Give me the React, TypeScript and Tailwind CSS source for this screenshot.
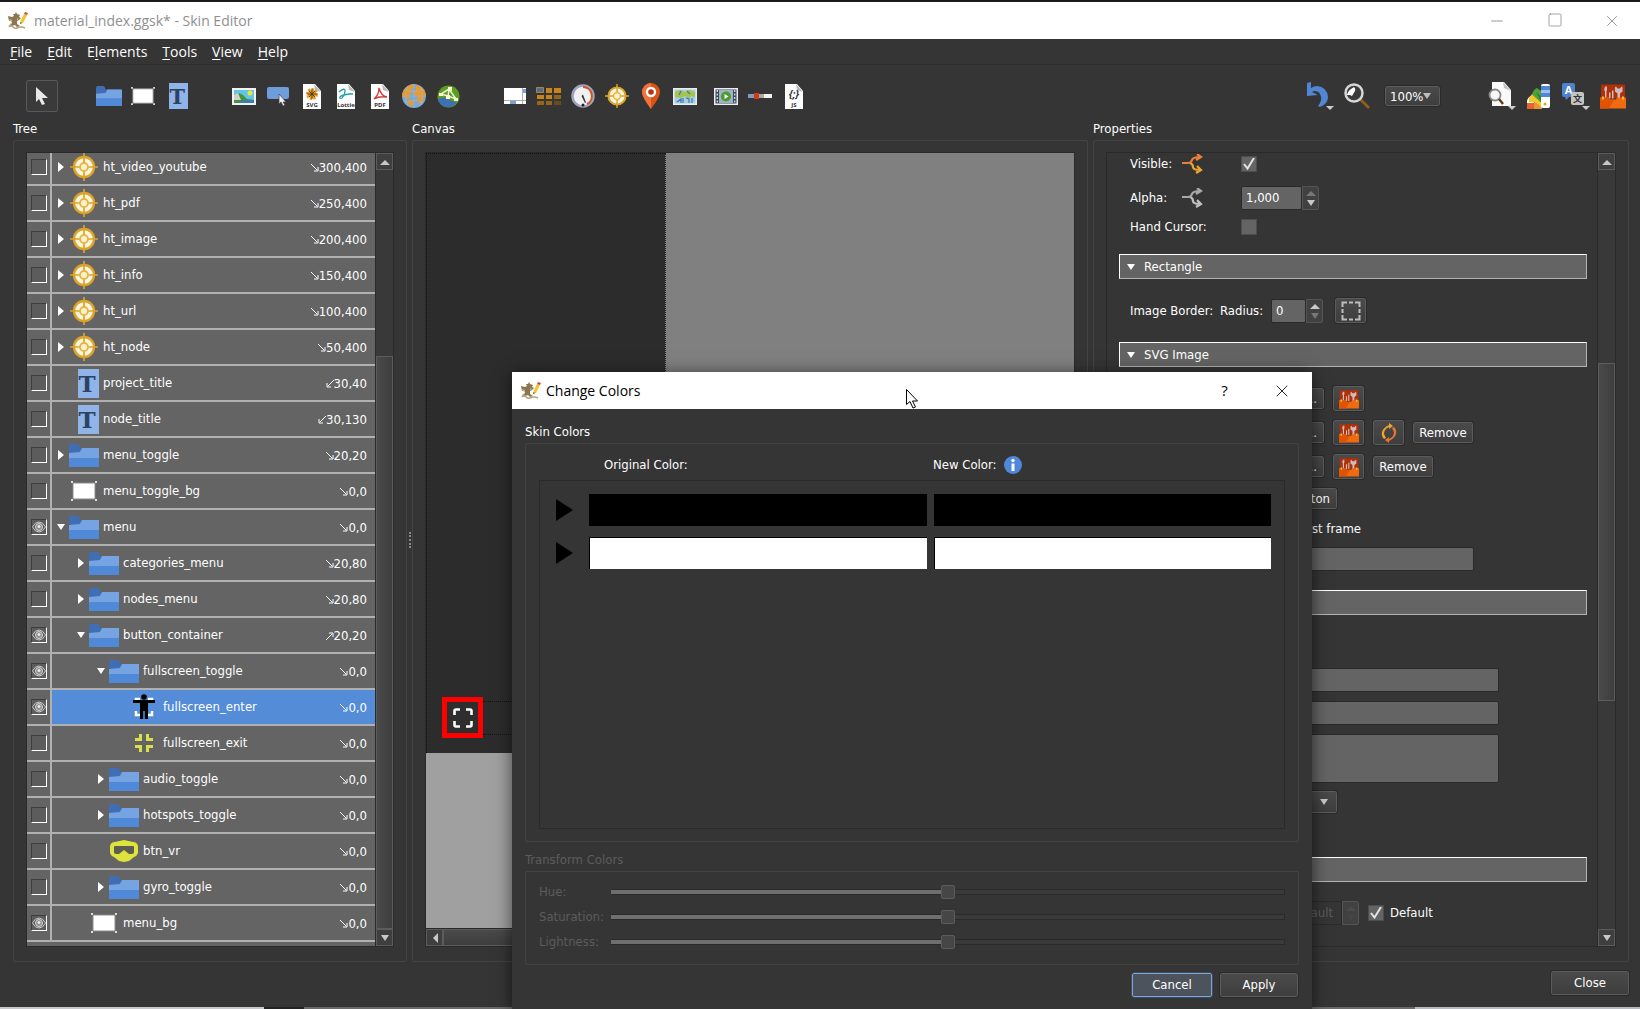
import React from "react";
import classNames from "clsx";
import { Minus, Square, X } from "lucide-react";

const treeItems = [
  { id: 1, label: "ht_video_youtube", icon: "target", level: 0, arrow: "right", pos: "300,400", anchor: "se" },
  { id: 2, label: "ht_pdf", icon: "target", level: 0, arrow: "right", pos: "250,400", anchor: "se" },
  { id: 3, label: "ht_image", icon: "target", level: 0, arrow: "right", pos: "200,400", anchor: "se" },
  { id: 4, label: "ht_info", icon: "target", level: 0, arrow: "right", pos: "150,400", anchor: "se" },
  { id: 5, label: "ht_url", icon: "target", level: 0, arrow: "right", pos: "100,400", anchor: "se" },
  { id: 6, label: "ht_node", icon: "target", level: 0, arrow: "right", pos: "50,400", anchor: "se" },
  { id: 7, label: "project_title", icon: "text", level: 0, pos: "30,40", anchor: "sw" },
  { id: 8, label: "node_title", icon: "text", level: 0, pos: "30,130", anchor: "sw" },
  { id: 9, label: "menu_toggle", icon: "folder", level: 0, arrow: "right", pos: "20,20", anchor: "se" },
  { id: 10, label: "menu_toggle_bg", icon: "rect", level: 0, pos: "0,0", anchor: "se" },
  { id: 11, label: "menu", icon: "folder", level: 0, arrow: "down", pos: "0,0", anchor: "se", visible: true },
  { id: 12, label: "categories_menu", icon: "folder", level: 1, arrow: "right", pos: "20,80", anchor: "se" },
  { id: 13, label: "nodes_menu", icon: "folder", level: 1, arrow: "right", pos: "20,80", anchor: "se" },
  { id: 14, label: "button_container", icon: "folder", level: 1, arrow: "down", pos: "20,20", anchor: "ne", visible: true },
  { id: 15, label: "fullscreen_toggle", icon: "folder", level: 2, arrow: "down", pos: "0,0", anchor: "se", visible: true },
  { id: 16, label: "fullscreen_enter", icon: "enter", level: 3, pos: "0,0", anchor: "se", visible: true },
  { id: 17, label: "fullscreen_exit", icon: "exit", level: 3, pos: "0,0", anchor: "se" },
  { id: 18, label: "audio_toggle", icon: "folder", level: 2, arrow: "right", pos: "0,0", anchor: "se" },
  { id: 19, label: "hotspots_toggle", icon: "folder", level: 2, arrow: "right", pos: "0,0", anchor: "se" },
  { id: 20, label: "btn_vr", icon: "vr", level: 2, pos: "0,0", anchor: "se" },
  { id: 21, label: "gyro_toggle", icon: "folder", level: 2, arrow: "right", pos: "0,0", anchor: "se" },
  { id: 22, label: "menu_bg", icon: "rect", level: 1, pos: "0,0", anchor: "se", visible: true },
];

const menus = [
  { before: "", key: "F", after: "ile" },
  { before: "", key: "E", after: "dit" },
  { before: "E", key: "l", after: "ements" },
  { before: "", key: "T", after: "ools" },
  { before: "", key: "V", after: "iew" },
  { before: "", key: "H", after: "elp" },
];

const indents = ["pl-0", "pl-5", "pl-10", "pl-[60px]"];

const buttonClasses =
  "flex items-center rounded-[2px] border border-[#5c5c5c] bg-linear-to-b from-[#4a4a4a] to-[#3e3e3e] outline outline-[#2a2a2a] text-white";
const fieldClasses = "bg-[#646464] border border-[#2a2a2a] rounded-[2px] text-white px-1 outline-none";

/* ---------- icons ---------- */

const AppIcon = () => (
  <svg width="20" height="18" viewBox="0 0 20 18" className="shrink-0">
    <path d="M0 4l4 1 2-1-1-2 2 0 1-2 1 2 3 1-1 2 2 1-2 2-2 1v3l3 2-3 1-2-2-3 1-2-1 2-2-1-3-2 1z" fill="#8a7650" />
    <path d="M1 7l3 1-1 2zM9 6l2 1-2 1z" fill="#c9bb98" />
    <path d="M1 15q2-2 4 0t4 1 4-1 4 1M3 12l-2 3" fill="none" stroke="#b5a47c" strokeWidth="1.500" />
    <path d="M12 12l1-4 3-6 3 1-4 8z" fill="#f7c326" />
    <path d="M16 2l1-2 3 1-1 2z" fill="#c8503a" />
    <path d="M12 12l.5-2 1.500 1z" fill="#555" />
  </svg>
);

const Target = ({ size = 24 }) => (
  <svg width={size} height={size} viewBox="0 0 28 28">
    <circle cx="14" cy="14" r="10" fill="#fdf6df" stroke="#dda32a" strokeWidth="2.400" />
    <path d="M14 0v28M0 14h28" stroke="#dda32a" strokeWidth="1.700" />
    <circle cx="14" cy="14" r="4" fill="#fdf1cc" stroke="#e6b548" strokeWidth="1.800" />
  </svg>
);

const Folder = ({ width = 26, height = 20 }) => (
  <svg width={width} height={height} viewBox="0 0 30 23" preserveAspectRatio="none">
    <path d="M0 2q0-2 2-2h6q2 0 2.500 2l.5 2h17v6H0z" fill="#3f6eb5" />
    <path d="M0 9l11-1 2-4h17v18H0z" fill="#76a4e2" />
    <path d="M0 14h30v9H0z" fill="#5089d8" />
  </svg>
);

const RectIcon = ({ width = 24, height = 18 }) => (
  <svg width={width} height={height} viewBox="0 0 26 20" preserveAspectRatio="none">
    <path d="M2 2h22v16H2z" fill="#fff" stroke="#8b8b8b" />
    <path d="M0 0h2v2H0zM24 0h2v2h-2zM0 18h2v2H0zM24 18h2v2h-2z" fill="#ddd" />
  </svg>
);

const TextIcon = ({ width = 19, height = 26 }) => (
  <svg width={width} height={height} viewBox="0 0 21 29" preserveAspectRatio="none">
    <rect width="21" height="29" fill="#90b4e8" />
    <text x="9" y="23" textAnchor="middle" fontFamily="DejaVu Serif" fontWeight="bold" fontSize="23" fill="#2c4263">T</text>
  </svg>
);

const EnterIcon = () => (
  <svg width="24" height="26" viewBox="0 0 24 26">
    <path d="M4 9V5h4M16 5h4v4M4 17v4h4M16 21h4v-4" fill="none" stroke="#fff" strokeWidth="2.500" />
    <circle cx="12" cy="3" r="2.800" fill="#000" />
    <path d="M1 6h22v3h-7v16h-3.200v-8h-1.600v8H8V9H1z" fill="#000" />
  </svg>
);

const ExitIcon = () => (
  <svg width="18" height="18" viewBox="0 0 18 18">
    <path d="M0 5.500h5.500V0M12.500 0v5.500H18M0 12.500h5.500V18M12.500 18v-5.500H18" fill="none" stroke="#dbe04a" strokeWidth="3" />
  </svg>
);

const VrIcon = () => (
  <svg width="28" height="22" viewBox="0 0 28 22">
    <path d="M5 2L14 0l9 2q4 0 5 4v7q-1 3-4 4l-5 4-5 1-5-1-5-4q-3-1-4-4V6q1-4 5-4z" fill="#dde23c" />
    <path d="M5 6h18q1 0 1 1v5q0 2-2 2h-3l-5-4-5 4H6q-2 0-2-2V7q0-1 1-1z" fill="#5c5c50" />
  </svg>
);

const PictureIcon = () => (
  <svg width="24" height="17" viewBox="0 0 24 17">
    <rect width="24" height="17" fill="#f2f2f2" />
    <rect x="2" y="2" width="20" height="13" fill="#62c4e6" />
    <circle cx="18" cy="5" r="2.500" fill="#f6e32e" />
    <path d="M2 12l5-7 4 2 4 4 7 1v3H2z" fill="#49923a" />
    <path d="M2 7l4-2 3 7H2z" fill="#cfd3cc" />
    <path d="M8 13q7-2 14-1v3H6z" fill="#3b80b3" />
  </svg>
);

const ButtonIcon = () => (
  <svg width="22" height="20" viewBox="0 0 22 20">
    <rect y="1" width="22" height="12" rx="2" fill="#6e9cdc" />
    <path d="M12 8v10l2-2 2 4 2-1-2-3h3z" fill="#eee" stroke="#444" strokeWidth=".7" />
  </svg>
);

const DocIcon = ({ caption, children }) => (
  <svg width="20" height="25" viewBox="0 0 20 25">
    <path d="M1 0h12l6 7v18H1z" fill="#fdfdfd" />
    <path d="M12 0l7 8-6-2z" fill="#b9b9b9" />
    {children}
    <text x="10" y="23" textAnchor="middle" fontFamily="Noto Sans" fontWeight="bold" fontSize="6" fill="#333">{caption}</text>
  </svg>
);

const EarthIcon = () => (
  <svg width="24" height="24" viewBox="0 0 24 24">
    <circle cx="12" cy="12" r="12" fill="#7aa9d6" />
    <path d="M2 6q4-5 9-6l1 3-3 2 1 3-3 3 1 3-3 1-3-2-2-1Q0 9 2 6zM14 1q5 1 8 5l2 5-2 1-1 5-4 3-2-5 1-3-4-1-1-3 3-2zM7 15l5 2-1 4-2 2-3-4z" fill="#ea9a2c" />
    <path d="M12 0v24M0 12h24M3 5q9 5 18 0M3 19q9-5 18 0M6 2q-5 10 0 20M18 2q5 10 0 20" fill="none" stroke="#a3b9c8" strokeWidth=".6" />
  </svg>
);

const RouteIcon = () => (
  <svg width="23" height="23" viewBox="0 0 23 23">
    <circle cx="11.500" cy="11.500" r="11" fill="#5a9e24" />
    <path d="M1 14q5-3 10 0t9 3q-3 5-9 5Q3 22 1 14z" fill="#3f6fb4" />
    <path d="M4 9l8-5 7 10-8-3zM12 4l-1 8" fill="none" stroke="#f2f4d4" strokeWidth="1.500" />
    <path d="M2 8h4v3H2zM11 2h4v4h-4zM17 13h4v3h-4zM9 10h4v4H9z" fill="#fdfbc9" />
  </svg>
);

const WindowIcon = () => (
  <svg width="22" height="16" viewBox="0 0 22 16">
    <rect width="22" height="16" fill="#fff" />
    <path d="M0 12.500h22M18.500 0v16" stroke="#999" strokeWidth=".8" />
    <path d="M19 1h3v4h-3zM6 13h6v3H6z" fill="#7ba1d8" />
  </svg>
);

const GridIcon = () => (
  <svg width="26" height="19" viewBox="0 0 26 19">
    <path d="M10 1h6v5h-6zM18 1h7v5h-7zM1 8h7v4H1zM10 8h6v4h-6z" fill="#c98418" />
    <path d="M18 8h7v4h-7zM1 14h7v4H1zM10 14h6v4h-6z" fill="#93651d" />
    <path d="M18 14h7v4h-7z" fill="#664b22" />
    <path d="M.5.500h7v5h-7z" fill="#4b7192" stroke="#a8843f" />
  </svg>
);

const GaugeIcon = () => (
  <svg width="24" height="24" viewBox="0 0 24 24">
    <circle cx="12" cy="12" r="10.500" fill="#f1f1f1" stroke="#9ea4bf" strokeWidth="2.500" />
    <path d="M12 3a9 9 0 0 1 4 17" fill="none" stroke="#d4521c" strokeWidth="2" />
    <path d="M10.500 12l1.500-1.500 3 8-1 .5z" fill="#333" />
    <circle cx="12" cy="21" r="1.500" fill="#222" />
  </svg>
);

const PinIcon = () => (
  <svg width="18" height="26" viewBox="0 0 18 26">
    <path d="M9 0a9 9 0 0 1 9 9q0 5-9 17Q0 14 0 9a9 9 0 0 1 9-9z" fill="#dc5214" />
    <path d="M9 0v26Q0 14 0 9a9 9 0 0 1 9-9z" fill="#f2713c" />
    <circle cx="9" cy="9" r="4" fill="#b5330d" stroke="#fff" strokeWidth="2.400" />
  </svg>
);

const MapIcon = () => (
  <svg width="24" height="17" viewBox="0 0 24 17">
    <rect width="24" height="17" fill="#e9eef0" />
    <rect x="1.500" y="1.500" width="21" height="14" fill="#a9cbe4" />
    <path d="M2 4l5-2 5 2 4-2 6 2v5l-4-1-2 3-4-3-5 2-5-1z" fill="#a4c44c" />
    <path d="M4 14l4-3v4M10 10v5M13 10l3 1v4M19 10v5M8 3L6 7M14 3l3 3" fill="none" stroke="#3d7bab" strokeWidth="1.200" />
  </svg>
);

const VideoIcon = () => (
  <svg width="24" height="17" viewBox="0 0 24 17">
    <rect width="24" height="17" fill="#eee" />
    <rect x="1.500" y="1.500" width="21" height="14" fill="#3c4557" />
    <rect x="5" y="2" width="14" height="13" fill="#9fb2c6" />
    <path d="M3.300 2v13M20.700 2v13" stroke="#c9d2e4" strokeWidth="1.500" strokeDasharray="2 1.500" />
    <circle cx="12" cy="8.500" r="5" fill="#4b9d2b" />
    <path d="M10.500 6l4 2.500-4 2.500z" fill="#fff" />
  </svg>
);

const SliderIcon = () => (
  <svg width="24" height="6" viewBox="0 0 24 6">
    <rect y="1" width="24" height="4" fill="#f4f4f4" />
    <path d="M0 1h7v4H0z" fill="#7d9ccc" />
    <path d="M11 1h5v4h-5z" fill="#aaa" />
    <rect x="6" width="5" height="6" fill="#dc3912" />
  </svg>
);

const UndoIcon = () => (
  <svg width="28" height="28" viewBox="0 0 28 28">
    <path d="M1 1l4-1v6q3-2 6-2 10 1 11 11 0 7-8 10l-2-1q4-5 3-9-1-6-6-6-2 0-3 1l6 3-11 1z" fill="#5086d4" />
    <path d="M20 24h8l-4 4z" fill="#ccc" />
  </svg>
);

const ZoomIcon = () => (
  <svg width="26" height="26" viewBox="0 0 26 26">
    <path d="M15 17l2-2 9 9-2 2z" fill="#8c5e1d" />
    <circle cx="10" cy="10" r="8.500" fill="#3a3a3a" stroke="#d6d6d6" strokeWidth="2.500" />
    <path d="M3 12q1-5 7-8 2 2 1 4l-3 5-2-1z" fill="#fff" />
  </svg>
);

const DocSearchIcon = () => (
  <svg width="28" height="28" viewBox="0 0 28 28">
    <path d="M4 0h12l7 8v16H4z" fill="#fafafa" />
    <path d="M15 0l8 9-7-3z" fill="#c2c2c2" />
    <circle cx="7" cy="13" r="5.500" fill="#f7f7f7" stroke="#888" strokeWidth="1.800" />
    <path d="M11 17l4 5" stroke="#5c3a1a" strokeWidth="2.400" />
    <path d="M20 24h8l-4 4z" fill="#ccc" />
  </svg>
);

const PaletteIcon = () => (
  <svg width="24" height="25" viewBox="0 0 24 25">
    <path d="M0 17q1-4 4-5l3 3v10H0z" fill="#fff" />
    <path d="M0 19h7v6H0z" fill="#e8622a" />
    <path d="M7 19h8v6H7z" fill="#e9933c" />
    <path d="M2 14l3-4 11 10-1 4q-5-7-13-6z" fill="#f5c92d" />
    <path d="M5 10q2-5 5-6l7 5v12z" fill="#4da13a" />
    <path d="M9 8l6 5v6z" fill="#2f7f2c" />
    <rect x="14" width="9" height="24" rx="2" fill="#fff" />
    <path d="M14 2h9v4h-9zM14 9h9v4h-9z" fill="#4e87d8" />
    <path d="M14 6h9v3h-9z" fill="#9ec0ee" />
    <circle cx="18" cy="20" r="1.500" fill="#dda32a" />
  </svg>
);

const TranslateIcon = () => (
  <svg width="28" height="28" viewBox="0 0 28 28">
    <rect y="1" width="13" height="14" rx="2" fill="#4d82d0" />
    <path d="M3 14h5l-4 4z" fill="#4d82d0" />
    <text x="6.500" y="12" textAnchor="middle" fontFamily="Noto Sans" fontWeight="bold" fontSize="11" fill="#fff">A</text>
    <rect x="9" y="10" width="13" height="13" rx="2" fill="#c4c4c4" />
    <text x="15.500" y="20" textAnchor="middle" fontFamily="Noto Sans CJK SC" fontWeight="bold" fontSize="9" fill="#333">文</text>
    <path d="M20 24h8l-4 4z" fill="#ccc" />
  </svg>
);

const ToolboxIcon = ({ size = 26 }) => (
  <svg width={size} height={size} viewBox="0 0 26 25">
    <path d="M1 1h24v14H1z" fill="#b03008" />
    <path d="M5 3h2v4H6.500v8H5V7H4zM9 9h1.500v6H9zM12 7h1.500v8H12zM16 3l1.500 2H20l1.500-2 1 1v4l-2.500 2v5h-2.500v-5L15 8V4z" fill="#cdbcc0" />
    <path d="M0 14h9l1 2h6l1-2h9v11H0z" fill="#f06a10" />
    <path d="M0 14h9l1 2h4L9 25H0z" fill="#e05304" />
    <path d="M2 13h2v3H2zM22 13h2v3h-2z" fill="#f8c030" />
  </svg>
);

const BranchIcon = ({ top, bottom }) => (
  <svg width="22" height="20" viewBox="0 0 22 20">
    <path d="M8 9q3 1 3 4t7 3M15 12l4 4-5 3" fill="none" stroke={bottom} strokeWidth="2.200" />
    <path d="M0 9h6q3 0 4-3t8-3M15 0l4 3-5 3" fill="none" stroke={top} strokeWidth="2.200" />
  </svg>
);

const RefreshIcon = () => (
  <svg width="16" height="20" viewBox="0 0 16 20">
    <path d="M8 0l4 3-4 3v-2Q3 6 3 11l2 4-2 1Q0 13 1 9t7-7z" fill="#f0a52c" />
    <path d="M8 20l-4-3 4-3v2q5-2 5-7l-2-4 2-1q3 3 2 7t-7 7z" fill="#e5762f" />
  </svg>
);

const FullscreenIcon = () => (
  <svg width="20" height="20" viewBox="0 0 20 20">
    <path d="M1.500 7V3q0-1.500 1.500-1.500h4M13 1.500h4q1.500 0 1.500 1.500v4M1.500 13v4q0 1.500 1.500 1.500h4M13 18.500h4q1.500 0 1.500-1.500v-4" fill="none" stroke="#fff" strokeWidth="2.600" />
  </svg>
);

const EyeIcon = () => (
  <svg width="14" height="12" viewBox="0 0 14 12" className="pointer-events-none col-start-1 row-start-1">
    <path d="M.5 6Q3 1 7 1t6.500 5Q11 11 7 11T.5 6z" fill="none" stroke="#c9c9c9" />
    <circle cx="7" cy="6" r="3.500" fill="#8d8d8d" stroke="#d6d6d6" />
    <circle cx="7" cy="5.500" r="1.500" fill="#e8e8e8" />
  </svg>
);

const Triangle = ({ dir, className = "text-[#c8c8c8]" }) => (
  <svg width="10" height="10" viewBox="0 0 10 10" className={classNames("shrink-0", className)}>
    {dir === "up" && <path d="M0 8h10L5 3z" fill="currentColor" />}
    {dir === "down" && <path d="M1 2h8L5 8z" fill="currentColor" />}
    {dir === "left" && <path d="M8 0v10L3 5z" fill="currentColor" />}
    {dir === "right" && <path d="M2 0v10l6-5z" fill="currentColor" />}
  </svg>
);

const AnchorArrow = ({ anchor }) => (
  <svg width="8" height="8" viewBox="0 0 8 8" className="shrink-0">
    {anchor === "se" && <path d="M0 0l6 6M7 3v4H3" fill="none" stroke="#fff" />}
    {anchor === "sw" && <path d="M8 0L2 6M1 3v4h4" fill="none" stroke="#fff" />}
    {anchor === "ne" && <path d="M0 8l6-6M3 1h4v4" fill="none" stroke="#fff" />}
  </svg>
);

const treeIcons = {
  target: <Target size={28} />,
  text: <TextIcon width={21} height={29} />,
  folder: <Folder width={30} height={23} />,
  rect: <RectIcon width={26} height={20} />,
  enter: <EnterIcon />,
  exit: <ExitIcon />,
  vr: <VrIcon />,
};

/* ---------- shared pieces ---------- */

const Tool = ({ label, wide = false, children }) => (
  <button aria-label={label} className={classNames("flex h-8 items-center justify-center", wide ? "w-[37px]" : "w-[34px]")}>
    {children}
  </button>
);

const ScrollButton = ({ dir }) => (
  <button
    aria-label={"Scroll " + dir}
    className="flex h-[17px] w-[17px] shrink-0 items-center justify-center border border-[#5c5c5c] bg-[#3f3f3f]"
  >
    <Triangle dir={dir} />
  </button>
);

const VerticalScroll = ({ thumb }) => (
  <div className="flex w-[18px] shrink-0 flex-col border-l border-[#2a2a2a] bg-[#393939]">
    <ScrollButton dir="up" />
    <div className="flex-1">
      <div className={classNames("border border-[#5c5c5c] bg-linear-to-r from-[#4a4a4a] to-[#3e3e3e]", thumb)} />
    </div>
    <ScrollButton dir="down" />
  </div>
);

const Panel = ({ title, className, children }) => (
  <section className={classNames("flex min-w-0 flex-col", className)}>
    <h2 className="h-[22px] leading-[22px]">{title}</h2>
    <div className="flex min-h-0 flex-1 rounded-[2px] border border-[#444444] px-3 pt-[11px] pb-[14px]">{children}</div>
  </section>
);

const CheckBox = ({ id, checked = false }) => (
  <span className="grid h-4 w-4 shrink-0 place-items-center">
    <input
      id={id}
      type="checkbox"
      defaultChecked={checked}
      className="col-start-1 row-start-1 h-4 w-4 appearance-none border border-[#4d4d4d] bg-[#646464]"
    />
    {checked && (
      <svg width="12" height="12" viewBox="0 0 12 12" className="pointer-events-none col-start-1 row-start-1">
        <path d="M1 6l3.500 4.500L11 0" fill="none" stroke="#e4e4e4" strokeWidth="2" />
      </svg>
    )}
  </span>
);

const Steppers = ({ name, up = "text-[#c8c8c8]", down = "text-[#c8c8c8]" }) => (
  <span className="flex w-[17px] flex-col items-center justify-center rounded-r-[2px] border border-[#555] bg-[#414141]">
    <button aria-label={name + " up"} className="flex h-[10px] items-center">
      <Triangle dir="up" className={up} />
    </button>
    <button aria-label={name + " down"} className="flex h-[10px] items-center">
      <Triangle dir="down" className={down} />
    </button>
  </span>
);

const SectionHeader = ({ title = "", className }) => (
  <button
    aria-label={title || "Section"}
    className={classNames(
      "flex h-[25px] w-full shrink-0 items-center gap-2 border border-[#b4b4b4] border-t-white border-l-white bg-[#646464] px-[6px] text-left",
      className
    )}
  >
    <Triangle dir="down" className="text-white" />
    <span>{title}</span>
  </button>
);

const ToolboxButton = () => (
  <button aria-label="Edit action" className={classNames(buttonClasses, "h-[25px] w-[31px] justify-center")}>
    <ToolboxIcon size={20} />
  </button>
);

const DotsButton = () => <button className={classNames(buttonClasses, "h-[21px] w-[30px] justify-end pr-[6px]")}>...</button>;

/* ---------- main parts ---------- */

const Toolbar = () => (
  <div className="flex h-[54px] shrink-0 items-end justify-between border-t border-[#2e2e2e] pr-[9px] pb-[6px] pl-[26px]">
    <div className="flex items-center">
      <button aria-label="Select" className="mr-[34px] flex h-8 w-8 items-center justify-center rounded-[2px] border border-[#585858] bg-[#3a3a3a]">
        <svg width="14" height="18" viewBox="0 0 14 18">
          <path d="M1 0v15l3-3 3 6 3-1-3-6h6z" fill="#e8e8e8" />
        </svg>
      </button>
      <Tool label="Container"><Folder /></Tool>
      <Tool label="Rectangle"><RectIcon /></Tool>
      <Tool label="Text" wide><TextIcon /></Tool>
      <div className="ml-[30px] flex">
        <Tool label="Image"><PictureIcon /></Tool>
        <Tool label="Button"><ButtonIcon /></Tool>
        <Tool label="SVG">
          <DocIcon caption="SVG">
            <circle cx="10" cy="10" r="4" fill="#e69a22" stroke="#e69a22" strokeWidth="4" strokeDasharray="2 1" />
            <path d="M10 5v10M5 10h10M7 7l6 6M13 7l-6 6" stroke="#3d2f14" strokeWidth=".8" />
          </DocIcon>
        </Tool>
        <Tool label="Lottie">
          <DocIcon caption="Lottie">
            <path d="M3 8q6-5 6-1t-3 7q-3 1-2-1t10-3h3" fill="none" stroke="#21a0a8" strokeWidth="1.300" />
          </DocIcon>
        </Tool>
        <Tool label="PDF">
          <DocIcon caption="PDF">
            <path d="M4 15q5-4 5-11 2 8 8 9-8-1-13 2" fill="none" stroke="#cf3a34" strokeWidth="1.300" />
          </DocIcon>
        </Tool>
        <Tool label="Web"><EarthIcon /></Tool>
        <Tool label="Node map"><RouteIcon /></Tool>
      </div>
      <div className="ml-[33px] flex">
        <Tool label="Scroll area"><WindowIcon /></Tool>
        <Tool label="Cloner"><GridIcon /></Tool>
        <Tool label="Timer"><GaugeIcon /></Tool>
        <Tool label="Hotspot"><Target /></Tool>
        <Tool label="Marker"><PinIcon /></Tool>
        <Tool label="Map"><MapIcon /></Tool>
      </div>
      <div className="ml-[7px] flex">
        <Tool label="Video"><VideoIcon /></Tool>
        <Tool label="Seekbar"><SliderIcon /></Tool>
        <Tool label="Code">
          <DocIcon caption="JS">
            <text x="10" y="14" textAnchor="middle" fontFamily="Noto Sans" fontWeight="bold" fontStyle="italic" fontSize="10" fill="#333">{"{;}"}</text>
          </DocIcon>
        </Tool>
      </div>
    </div>
    <div className="flex items-center">
      <Tool label="Undo" wide><UndoIcon /></Tool>
      <Tool label="Zoom" wide><ZoomIcon /></Tool>
      <span className="mr-[43px] ml-[10px] grid items-center">
        <select aria-label="Zoom level" className={classNames(buttonClasses, "col-start-1 row-start-1 h-5 w-[55px] appearance-none pl-1")}>
          <option>100%</option>
        </select>
        <Triangle dir="down" className="pointer-events-none col-start-1 row-start-1 mr-2 justify-self-end text-[#bdbdbd]" />
      </span>
      <Tool label="Preview" wide><DocSearchIcon /></Tool>
      <Tool label="Change colors" wide><PaletteIcon /></Tool>
      <Tool label="Language" wide><TranslateIcon /></Tool>
      <Tool label="Toolbox" wide><ToolboxIcon /></Tool>
    </div>
  </div>
);

const TreeRow = ({ item }) => {
  const selectedId = 16;

  return (
    <li className="flex h-9 shrink-0 border-b-2 border-[#b0b0b0]">
      <span className="flex w-[25px] shrink-0 items-center border-r-2 border-[#b0b0b0] pl-1">
        <span className="grid h-4 w-4 place-items-center">
          <input
            type="checkbox"
            aria-label={"Show " + item.label}
            defaultChecked={item.visible}
            className="col-start-1 row-start-1 h-4 w-4 appearance-none border border-t-[#3e3e3e] border-r-white border-b-white border-l-[#3e3e3e] bg-[#5c5c5c]"
          />
          {item.visible && <EyeIcon />}
        </span>
      </span>
      <div
        className={classNames("flex min-w-0 flex-1 items-center pr-2", {
          ["bg-[#548cd8]"]: item.id === selectedId,
        })}
      >
        <span className={classNames("flex items-center", indents[item.level])}>
          <span className="flex w-[17px] justify-center pl-px">
            {item.arrow && <Triangle dir={item.arrow} className="text-white" />}
          </span>
          <span className={classNames("flex w-[30px] items-center", item.icon === "text" ? "justify-end" : "justify-center")}>
            {treeIcons[item.icon]}
          </span>
          <span className="pl-1">{item.label}</span>
        </span>
        <span className="ml-auto flex items-center pt-[2px]">
          <AnchorArrow anchor={item.anchor} />
          {item.pos}
        </span>
      </div>
    </li>
  );
};

const Tree = () => (
  <Panel title="Tree" className="w-[394px]">
    <div className="flex min-w-0 flex-1 border border-[#2a2a2a]">
      <div className="min-w-0 flex-1 overflow-hidden bg-[#646464]">
        <ul className="-mt-[3px] flex flex-col">
          {treeItems.map((item) => (
            <TreeRow item={item} key={item.id} />
          ))}
        </ul>
      </div>
      <VerticalScroll thumb="mt-[186px] h-[573px]" />
    </div>
  </Panel>
);

const Canvas = () => (
  <Panel title="Canvas" className="flex-1">
    <div className="flex min-w-0 flex-1 flex-col border border-[#2a2a2a]">
      <div className="relative flex min-h-0 flex-1 flex-col">
        <div className="flex h-[600px]">
          <div className="w-[239px] border-t border-l border-dotted border-[#111] bg-[#2c2c2c]" />
          <div className="flex-1 border-l border-dotted border-[#222] bg-[#808080]" />
        </div>
        <div className="flex-1 bg-[#a0a0a0]" />
        {/* selected element on the stage */}
        <div className="absolute top-[548px] left-[57px] h-[34px] w-[180px] border-y border-dotted border-[#111]" />
        <div className="absolute top-[544px] left-4 flex h-[41px] w-[41px] items-center justify-center border-5 border-[#ff0000] bg-[#2e2e2e]">
          <FullscreenIcon />
        </div>
      </div>
      <div className="flex h-[18px] border-t border-[#2a2a2a] bg-[#393939]">
        <ScrollButton dir="left" />
        <div className="w-[400px] border border-[#5c5c5c] bg-linear-to-b from-[#4a4a4a] to-[#3e3e3e]" />
      </div>
    </div>
  </Panel>
);

const Properties = () => (
  <Panel title="Properties" className="w-[536px]">
    <div className="flex min-w-0 flex-1 border border-[#2a2a2a]">
      <div className="flex min-w-0 flex-1 flex-col overflow-hidden pt-px pr-[10px] pl-3">
        <div className="flex h-5 shrink-0 items-center pl-[11px]">
          <label htmlFor="visible" className="w-[52px]">Visible:</label>
          <span className="w-[59px]"><BranchIcon top="#e8823a" bottom="#eda630" /></span>
          <CheckBox id="visible" checked />
        </div>
        <div className="mt-3 flex h-6 shrink-0 items-center pl-[11px]">
          <label htmlFor="alpha" className="w-[52px]">Alpha:</label>
          <span className="w-[59px]"><BranchIcon top="#a9a9a9" bottom="#c2c2c2" /></span>
          <span className="flex h-6">
            <input id="alpha" defaultValue="1,000" className={classNames(fieldClasses, "w-[61px]")} />
            <Steppers name="Alpha" up="text-[#777]" />
          </span>
        </div>
        <div className="mt-[7px] flex h-5 shrink-0 items-center pl-[11px]">
          <label htmlFor="hand" className="w-[111px]">Hand Cursor:</label>
          <CheckBox id="hand" />
        </div>

        <SectionHeader title="Rectangle" className="mt-[17px]" />
        <div className="mt-[19px] flex h-[25px] shrink-0 items-center pl-[11px]">
          <span className="w-[90px]">Image Border:</span>
          <label htmlFor="radius" className="w-[51px]">Radius:</label>
          <span className="flex h-6">
            <input id="radius" defaultValue="0" className={classNames(fieldClasses, "w-[35px]")} />
            <Steppers name="Radius" down="text-[#777]" />
          </span>
          <button aria-label="Border" className={classNames(buttonClasses, "ml-3 h-[25px] w-[31px] justify-center")}>
            <svg width="20" height="20" viewBox="0 0 20 20">
              <path d="M1.500 6V1.500H6M8 1.500h4M14 1.500h4.500V6M18.500 8v4M18.500 14v4.500H14M12 18.500H8M6 18.500H1.500V14M1.500 12V8" fill="none" stroke="#bdbdbd" strokeWidth="2" />
            </svg>
          </button>
        </div>

        <SectionHeader title="SVG Image" className="mt-[19px]" />
        <div className="mt-[19px] flex h-[25px] shrink-0 items-center gap-[9px] pl-[175px]">
          <DotsButton />
          <ToolboxButton />
        </div>
        <div className="mt-[9px] flex h-[25px] shrink-0 items-center gap-[9px] pl-[175px]">
          <DotsButton />
          <ToolboxButton />
          <button aria-label="Swap" className={classNames(buttonClasses, "h-[25px] w-[31px] justify-center")}>
            <RefreshIcon />
          </button>
          <button className={classNames(buttonClasses, "h-[21px] w-[60px] justify-center")}>Remove</button>
        </div>
        <div className="mt-[9px] flex h-[25px] shrink-0 items-center gap-[9px] pl-[175px]">
          <DotsButton />
          <ToolboxButton />
          <button className={classNames(buttonClasses, "h-[21px] w-[60px] justify-center")}>Remove</button>
        </div>
        <div className="mt-[9px] flex h-[21px] w-[218px] shrink-0 justify-end">
          <button className={classNames(buttonClasses, "px-[6px]")}>Button</button>
        </div>
        <p className="mt-[10px] h-5 w-[242px] shrink-0 text-right leading-5">first frame</p>
        <input aria-label="Style" className={classNames(fieldClasses, "mt-2 ml-[116px] h-6 w-[239px] shrink-0")} />

        <SectionHeader className="mt-[19px]" />
        <input aria-label="Title" className={classNames(fieldClasses, "mt-[53px] ml-[116px] h-6 w-[264px] shrink-0")} />
        <input aria-label="Hint" className={classNames(fieldClasses, "mt-[9px] ml-[116px] h-6 w-[264px] shrink-0")} />
        <textarea aria-label="Description" className={classNames(fieldClasses, "mt-[9px] ml-[116px] h-[49px] w-[264px] shrink-0 resize-none")} />
        <span className="mt-2 ml-[116px] grid h-[22px] w-[102px] shrink-0 items-center">
          <select aria-label="Mode" className={classNames(buttonClasses, "col-start-1 row-start-1 h-[22px] w-full appearance-none")} />
          <Triangle dir="down" className="pointer-events-none col-start-1 row-start-1 mr-2 justify-self-end text-[#c8c8c8]" />
        </span>

        <SectionHeader className="mt-[44px]" />
        <div className="mt-[19px] flex h-6 shrink-0 items-center pl-[116px]">
          <span className="flex h-6">
            <input
              aria-label="Tab index"
              disabled
              defaultValue="Default"
              className="w-[107px] border border-[#2a2a2a] pr-2 text-right text-[#5c5c5c]"
            />
            <Steppers name="Tab index" up="text-[#4a4a4a]" down="text-[#454545]" />
          </span>
          <span className="ml-[9px] flex items-center gap-[6px]">
            <CheckBox id="default" checked />
            <label htmlFor="default">Default</label>
          </span>
        </div>
      </div>
      <VerticalScroll thumb="mt-[193px] h-[338px]" />
    </div>
  </Panel>
);

const ColorRow = ({ name, swatch }) => (
  <div className="flex h-8 items-center">
    <button aria-label={"Expand " + name} className="w-[33px]">
      <svg width="17" height="24" viewBox="0 0 17 24">
        <path d="M0 1v22l17-11z" fill="#000" />
      </svg>
    </button>
    <div className={classNames("h-8 flex-1 border-t border-l border-black", swatch)} />
    <button aria-label={"New color for " + name} className={classNames("ml-[7px] h-8 flex-1 border-t border-l border-black", swatch)} />
  </div>
);

const TransformSlider = ({ label }) => (
  <div className="flex h-[25px] items-center">
    <label htmlFor={label} className="w-[72px]">{label}:</label>
    <span className="grid flex-1 items-center">
      <span className="col-start-1 row-start-1 flex">
        <span className="h-[6px] w-1/2 border-y border-[#2a2a2a] bg-[#6f6f6f]" />
        <span className="h-[6px] w-1/2 border border-[#2a2a2a] bg-[#3a3a3a]" />
      </span>
      <input
        id={label}
        type="range"
        disabled
        className="col-start-1 row-start-1 w-full appearance-none bg-transparent [&::-webkit-slider-thumb]:h-[14px] [&::-webkit-slider-thumb]:w-[14px] [&::-webkit-slider-thumb]:appearance-none [&::-webkit-slider-thumb]:rounded-[2px] [&::-webkit-slider-thumb]:border [&::-webkit-slider-thumb]:border-[#5c5c5c] [&::-webkit-slider-thumb]:bg-[#464646]"
      />
    </span>
  </div>
);

const ChangeColorsDialog = () => (
  <div
    role="dialog"
    aria-label="Change Colors"
    className="absolute top-[372px] left-[512px] flex h-[640px] w-[800px] flex-col bg-[#353535] shadow-[0_2px_16px_rgba(0,0,0,0.6)]"
  >
    <header className="flex h-[37px] items-center bg-white pl-[9px] text-black">
      <AppIcon />
      <span className="pl-[5px] font-['Open_Sans',sans-serif] text-[14px]">Change Colors</span>
      <button aria-label="Help" className="ml-auto w-[57px] font-['Open_Sans',sans-serif] text-[15px]">?</button>
      <button aria-label="Close dialog" className="mr-[2px] flex w-[57px] justify-center">
        <X size={20} strokeWidth={1} />
      </button>
    </header>
    <div className="flex flex-col px-[13px] pt-3">
      <h2 className="h-[22px] leading-[22px]">Skin Colors</h2>
      <div className="h-[399px] rounded-[2px] border border-[#444444] px-[13px]">
        <div className="flex h-[36px] items-center pt-[6px]">
          <span className="w-[329px] pl-[65px]">Original Color:</span>
          <span className="flex items-center gap-2 pl-[65px]">
            New Color:
            <svg width="18" height="18" viewBox="0 0 18 18">
              <circle cx="9" cy="9" r="9" fill="#4f87d9" />
              <circle cx="9" cy="4.500" r="1.700" fill="#fff" />
              <path d="M7.500 7.500h3V15h-3z" fill="#fff" />
            </svg>
          </span>
        </div>
        <div className="flex h-[349px] flex-col gap-[11px] border border-[#2a2a2a] pt-[13px] pr-[13px] pl-4">
          <ColorRow name="black" swatch="bg-black" />
          <ColorRow name="white" swatch="bg-white" />
        </div>
      </div>
      <h2 className="mt-[7px] h-[22px] leading-[22px] text-[#5c5c5c]">Transform Colors</h2>
      <div className="rounded-[2px] border border-[#444444] px-[13px] pt-[7px] pb-[10px] text-[#5c5c5c]">
        <TransformSlider label="Hue" />
        <TransformSlider label="Saturation" />
        <TransformSlider label="Lightness" />
      </div>
      <div className="mt-2 flex items-center justify-end gap-2 pr-px">
        <button className="h-6 w-20 rounded-[2px] border border-[#7fa5d8] bg-[#4d535c] outline outline-[#3c4c62]">Cancel</button>
        <button className={classNames(buttonClasses, "h-6 w-[78px] justify-center")}>Apply</button>
      </div>
    </div>
  </div>
);

const App = () => (
  <div className="relative flex h-screen flex-col overflow-hidden bg-[#353535] font-['DejaVu_Sans_Condensed','Noto_Sans',sans-serif] text-[13px] text-white">
    <div className="h-[2px] shrink-0 bg-[#1c1a1e]" />
    <header className="flex h-[37px] shrink-0 items-center bg-white pl-2 text-[#8f8f8f]">
      <AppIcon />
      <h1 className="pl-[6px] font-['Open_Sans',sans-serif] text-[14px]">material_index.ggsk* - Skin Editor</h1>
      <div className="ml-auto flex text-[#777]">
        <button aria-label="Minimize" className="flex w-[58px] justify-center"><Minus size={18} strokeWidth={1} /></button>
        <button aria-label="Maximize" className="flex w-[58px] justify-center"><Square size={16} strokeWidth={1} /></button>
        <button aria-label="Close window" className="flex w-14 justify-center"><X size={18} strokeWidth={1} /></button>
      </div>
    </header>
    <nav className="flex h-[25px] shrink-0 items-center gap-[15px] pl-[10px] font-['Open_Sans',sans-serif] text-[14px]">
      {menus.map((menu) => (
        <button key={menu.key}>
          {menu.before}
          <span className="underline underline-offset-2">{menu.key}</span>
          {menu.after}
        </button>
      ))}
    </nav>
    <Toolbar />
    <main className="flex min-h-0 flex-1 pr-[11px] pl-[13px]">
      <Tree />
      <div className="flex w-[5px] items-center justify-center">
        <span className="h-4 border-l-2 border-dotted border-[#8a8a8a]" />
      </div>
      <Canvas />
      <div className="w-[5px]" />
      <Properties />
    </main>
    <footer className="flex h-[45px] shrink-0 justify-end pt-[9px] pr-[11px]">
      <button className={classNames(buttonClasses, "h-6 w-[78px] justify-center")}>Close</button>
    </footer>
    <div className="flex h-[2px] shrink-0">
      <div className="w-[264px] bg-[#c4c8cc]" />
      <div className="w-10 bg-[#222]" />
      <div className="flex-1 bg-[#6a6a6a]" />
      <div className="w-[225px] bg-[#b4bac0]" />
    </div>
    <ChangeColorsDialog />
    {/* mouse pointer */}
    <svg width="14" height="20" viewBox="0 0 14 20" className="absolute top-[389px] left-[906px]">
      <path d="M.5.500v15l3.500-3 3 6.500 2.500-1-3-6h5z" fill="#fff" stroke="#000" />
    </svg>
  </div>
);

export default App;
